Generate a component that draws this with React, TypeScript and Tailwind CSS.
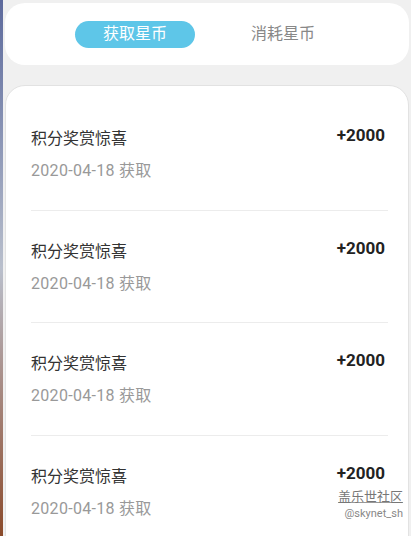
const rows = [1, 2, 3, 4];

export default function App() {
  return (
    <div
      className="relative flex h-[536px] w-[411px] overflow-hidden bg-[#f0f0f0]"
      style={{ fontFamily: "Roboto, 'Noto Sans CJK SC', sans-serif" }}
    >
      {/* sliver of wallpaper on the left edge */}
      <div className="w-[3px] shrink-0 bg-gradient-to-b from-[#5d6a9c] via-[#b9bfcc] to-[#8a4a2a]" />
      <div className="flex flex-1 flex-col px-[2px] pt-[3px]">
        <div className="flex h-[62px] shrink-0 items-center rounded-[20px] bg-white pl-[70px]">
          <div className="flex h-[27px] w-[120px] items-center justify-center rounded-full bg-[#5ec6e8] text-[16px] text-white">
            获取星币
          </div>
          <div className="ml-[28px] flex h-[27px] w-[120px] items-center justify-center text-[16px] text-[#888]">
            消耗星币
          </div>
        </div>
        <div className="mt-[20px] shrink-0 rounded-t-[20px] border border-[#e2e2e2] bg-white pl-[25px] pr-[20px] pt-[12px]">
          {rows.map((r) => (
            <div
              key={r}
              className="flex shrink-0 items-start justify-between border-b border-[#ececec] pt-[29px] pb-[26.5px]"
            >
              <div className="flex flex-col gap-[8px]">
                <div className="text-[16px] leading-[24px] text-[#333]">积分奖赏惊喜</div>
                <div className="text-[16px] leading-[24px] tracking-[0.3px] text-[#999]">2020-04-18 获取</div>
              </div>
              <div className="mt-[-4px] pr-[3px] text-[17px] font-bold leading-[24px] text-[#222]">
                +2000
              </div>
            </div>
          ))}
        </div>
      </div>
      <div className="absolute right-[8px] top-[488px] flex flex-col items-end">
        <span className="text-[13px] leading-[18px] text-[#777] underline decoration-[#999]">盖乐世社区</span>
        <span className="text-[11px] leading-[16px] text-[#888]">@skynet_sh</span>
      </div>
    </div>
  );
}
